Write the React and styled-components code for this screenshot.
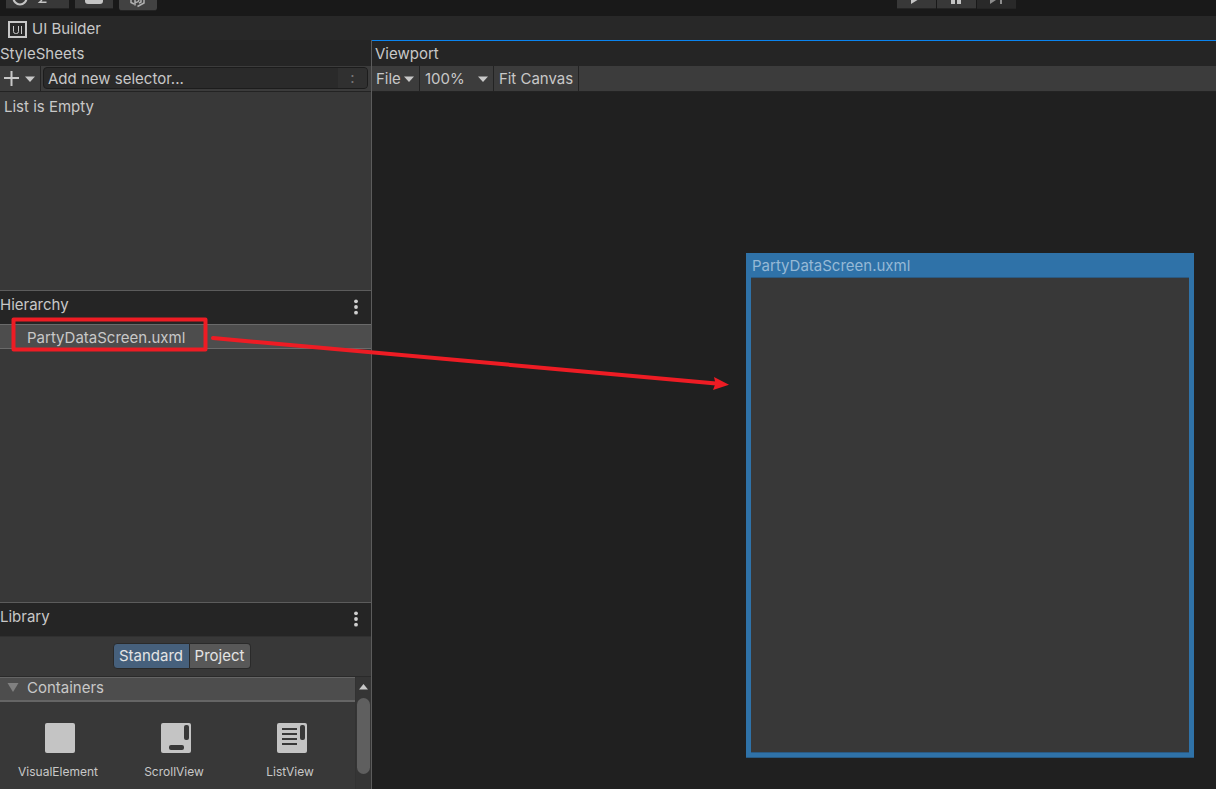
import React from "react";
import styled, { createGlobalStyle } from "styled-components";

const GlobalStyle = createGlobalStyle`
  *, *::before, *::after { box-sizing: border-box; }
  body { margin: 0; background: #202020; }
  button, input, select { font: inherit; color: inherit; margin: 0; }
`;

const Page = styled.div`
  position: relative;
  display: flex;
  flex-direction: column;
  min-height: 100vh;
  overflow: hidden;
  background: #202020;
  color: #c8c8c8;
  font: 15px/24px Inter, "Liberation Sans", sans-serif;
`;

const TopBar = styled.header`
  display: flex;
  align-items: start;
  justify-content: space-between;
  height: 16px;
  padding: 0 200px 0 6px;
  background: #191919;
`;

const ToolGroup = styled.div`
  display: flex;
  align-items: start;
  gap: ${(p) => p.$gap}px;
`;

const ToolButton = styled.button`
  display: flex;
  align-items: start;
  width: ${(p) => p.$width}px;
  height: ${(p) => (p.$tall ? 11 : 9)}px;
  padding: 0;
  border: 0;
  border-bottom: 1px solid #242424;
  border-radius: ${(p) => (p.$tall ? "0 0 3px 3px" : 0)};
  background: ${(p) => (p.$dim ? "#292929" : p.$tall ? "#424242" : "#383838")};
  svg { display: block; }
`;

const WindowTab = styled.div`
  display: flex;
  align-items: center;
  gap: 5px;
  height: 24px;
  padding: 2px 8px 0;
  background: #282828;
`;

const Workspace = styled.main`
  flex: 1;
  display: grid;
  grid-template-columns: 372px minmax(0, 1fr);
`;

const Sidebar = styled.div`
  display: flex;
  flex-direction: column;
  border-right: 1px solid #5c5c5c;
  background: #383838;
`;

const Panel = styled.section`
  flex: ${(p) => p.$share} 1 0;
  display: flex;
  flex-direction: column;
  min-height: 0;
  border-top: ${(p) => (p.$divided ? "1px solid #5c5c5c" : 0)};
`;

const PanelHeader = styled.div`
  display: flex;
  align-items: start;
  justify-content: space-between;
  height: ${(p) => (p.$tall ? 33 : 26)}px;
  padding: 2px 7px 0 0;
  background: #252525;
`;

const Title = styled.h2`
  margin: 0;
  font: inherit;
`;

const MoreButton = styled.button`
  width: 16px;
  height: 28px;
  padding: 0;
  border: 0;
  background: none;
  svg { display: block; margin: 0 auto; }
`;

const Toolbar = styled.div`
  display: flex;
  align-items: stretch;
  height: 26px;
  border-bottom: 1px solid #232323;
  background: #3c3c3c;
`;

const ToolbarButton = styled.button`
  display: flex;
  align-items: center;
  gap: ${(p) => p.$gap || 3}px;
  padding: 0 5px;
  padding-left: ${(p) => p.$inset || 5}px;
  border: 0;
  border-right: 1px solid #232323;
  background: none;
  white-space: nowrap;
`;

const SelectorField = styled.div`
  flex: 1;
  display: flex;
  align-items: stretch;
  height: 22px;
  margin: 1px 3px 0 2px;
  border: 1px solid #1c1c1c;
  border-radius: 4px;
  overflow: hidden;
  background: #2a2a2a;
`;

const SelectorInput = styled.input`
  flex: 1;
  min-width: 0;
  padding: 2px 4px 0;
  border: 0;
  outline: 0;
  background: none;
  &::placeholder { color: #c8c8c8; opacity: 1; }
`;

const PseudoButton = styled.button`
  width: 29px;
  padding: 0;
  border: 0;
  background: #303030;
  color: #777;
  line-height: 20px;
`;

const ZoomWrap = styled.label`
  display: flex;
  align-items: center;
  width: 74px;
  padding: 0 5px;
  border-right: 1px solid #232323;
`;

const ZoomSelect = styled.select`
  flex: 1;
  min-width: 0;
  padding: 0;
  border: 0;
  outline: 0;
  appearance: none;
  background: none;
`;

const EmptyNote = styled.p`
  margin: 0;
  padding: 3px 4px;
`;

const TreeRow = styled.button`
  height: 25px;
  padding: 2px 27px 0;
  border: solid #6a6a6a;
  border-width: 1px 0;
  background: #4d4d4d;
  line-height: 22px;
  text-align: left;
`;

const Segments = styled.div`
  display: flex;
  justify-content: center;
  height: 40px;
  padding: 6px 8px 7px 0;
  border-top: 1px solid #303030;
`;

const Segment = styled.button`
  height: 26px;
  min-width: ${(p) => (p.$active ? 77 : 61)}px;
  padding: 0 4px;
  border: 1px solid #2a2a2a;
  border-left-width: ${(p) => (p.$active ? 1 : 0)}px;
  border-radius: ${(p) => (p.$active ? "4px 0 0 4px" : "0 4px 4px 0")};
  background: ${(p) => (p.$active ? "#46607c" : "#585858")};
  color: #e4e4e4;
`;

const LibraryBody = styled.div`
  flex: 1;
  display: flex;
  min-height: 0;
  border-top: 1px solid #2a2a2a;
`;

const LibraryList = styled.div`
  flex: 1;
`;

const Foldout = styled.button`
  display: flex;
  align-items: start;
  gap: 8px;
  width: 100%;
  height: 25px;
  padding: 0 7px;
  border: solid #656565;
  border-width: 1px 0 2px;
  background: #4d4d4d;
  line-height: 20px;
  svg { margin-top: 5px; }
`;

const Tiles = styled.div`
  display: grid;
  grid-template-columns: repeat(3, 116px);
  padding-top: 21px;
`;

const Tile = styled.button`
  display: flex;
  flex-direction: column;
  align-items: center;
  gap: 8px;
  padding: 0;
  border: 0;
  background: none;
  font-size: 12px;
  line-height: 22px;
  svg { margin-left: 3px; }
`;

const Scrollbar = styled.div`
  display: flex;
  flex-direction: column;
  align-items: center;
  gap: 8px;
  width: 16px;
  padding-top: 7px;
  border-left: 1px solid #323232;
  background: #353535;
`;

const ScrollThumb = styled.div`
  width: 13px;
  height: 76px;
  border-radius: 7px;
  background: #5f5f5f;
`;

const Viewport = styled.section`
  display: flex;
  flex-direction: column;
  border-top: 1px solid #0a84f0;
`;

const ViewportHeader = styled(PanelHeader)`
  height: 25px;
  padding: 1px 3px 0;
`;

const Stage = styled.div`
  position: relative;
  flex: 1;
  background: #202020;
`;

const CanvasFrame = styled.div`
  position: absolute;
  top: 161px;
  right: 22px;
  display: flex;
  flex-direction: column;
  width: 448px;
  height: 505px;
  padding: 0 5px 4px;
  border-bottom: 1px solid #285a83;
  background: #2f72a8;
`;

const CanvasTitle = styled.div`
  height: 24px;
  padding-left: 1px;
  color: #96b9d6;
  line-height: 26px;
`;

const CanvasSurface = styled.div`
  flex: 1;
  border: solid #2b5a82;
  border-width: 1px 0;
  background: #383838;
`;

const Annotation = styled.svg`
  position: absolute;
  top: 0;
  left: 0;
  pointer-events: none;
`;

const Caret = () => (
  <svg width="10" height="6" viewBox="0 0 10 6" aria-hidden="true">
    <path d="M0 0.5h10L5 6z" fill="#c8c8c8" />
  </svg>
);

const Dots = () => (
  <svg width="4" height="16" viewBox="0 0 4 16" fill="#d0d0d0" aria-hidden="true">
    <circle cx="2" cy="2.3" r="1.9" />
    <circle cx="2" cy="8" r="1.9" />
    <circle cx="2" cy="13.7" r="1.9" />
  </svg>
);

const TileIcon = ({ kind }) => (
  <svg width="30" height="30" viewBox="0 0 30 30" aria-hidden="true">
    <rect width="30" height="30" rx="2" fill="#c4c4c4" />
    <g fill="#383838">
      {kind !== "VisualElement" && <rect x="23" y="2" width="5" height="15" rx="2" />}
      {kind === "ScrollView" && <rect x="8" y="22" width="15" height="5" rx="2" />}
      {kind === "ListView" &&
        [5, 10, 15, 20].map((y) => <rect key={y} x="5" y={y} width="15" height="2" />)}
    </g>
  </svg>
);

const tiles = ["VisualElement", "ScrollView", "ListView"];

export default function App() {
  return (
    <Page>
      <GlobalStyle />
      <TopBar>
        <ToolGroup $gap={6}>
          <ToolButton $width={63} aria-label="Undo history">
            <svg width="63" height="8" viewBox="0 0 63 8" fill="none" stroke="#c4c4c4">
              <path d="M7.500 -2a6.500 6.500 0 0 0 13 0" strokeWidth="2.200" />
              <path d="M36 0l-2.500 2.300h7" strokeWidth="1.400" />
            </svg>
          </ToolButton>
          <ToolButton $width={38} aria-label="Cloud">
            <svg width="38" height="8" viewBox="0 0 38 8">
              <path d="M10 0h18v1q0 3-3 3H13q-3 0-3-3z" fill="#c4c4c4" />
            </svg>
          </ToolButton>
          <ToolButton $width={38} $tall aria-label="Version control">
            <svg width="38" height="10" viewBox="0 0 38 10" fill="none" stroke="#b0b0b0" strokeWidth="1.5">
              <path d="M12 0v2.500l3 1.500M16 0v5.500M16 2q3 1 4-2M18.500 6.500l6.500-3.500V0M20 3l2-1V0" />
            </svg>
          </ToolButton>
        </ToolGroup>
        <ToolGroup $gap={1}>
          <ToolButton $width={39} aria-label="Play">
            <svg width="39" height="8" viewBox="0 0 39 8"><path d="M14 0h6.500L14 4z" fill="#c4c4c4" /></svg>
          </ToolButton>
          <ToolButton $width={39} aria-label="Pause">
            <svg width="39" height="8" viewBox="0 0 39 8"><path d="M14 0h4v4h-4zM20 0h4v4h-4z" fill="#c4c4c4" /></svg>
          </ToolButton>
          <ToolButton $width={39} $dim aria-label="Step">
            <svg width="39" height="8" viewBox="0 0 39 8"><path d="M13 0h6l-6 4zM23 0h2v4h-2z" fill="#8c8c8c" /></svg>
          </ToolButton>
        </ToolGroup>
      </TopBar>

      <WindowTab>
        <svg width="19" height="17" viewBox="0 0 19 17" fill="none" stroke="#c8c8c8" aria-hidden="true">
          <rect x="1" y="1" width="17" height="15" strokeWidth="2" />
          <path d="M5.500 5v5.500q0 2 2 2h1q2 0 2-2V5M13.500 5v8" strokeWidth="1" />
        </svg>
        <span>UI Builder</span>
      </WindowTab>

      <Workspace>
        <Sidebar>
          <Panel $share={250}>
            <PanelHeader><Title>StyleSheets</Title></PanelHeader>
            <Toolbar>
              <ToolbarButton $inset={4} $gap={5} aria-label="Add style sheet">
                <svg width="16" height="16" viewBox="0 0 16 16"><path d="M0 7h15M7.500 0v15" stroke="#c8c8c8" strokeWidth="2" /></svg>
                <Caret />
              </ToolbarButton>
              <SelectorField>
                <SelectorInput aria-label="Selector" placeholder="Add new selector..." />
                <PseudoButton aria-label="Pseudo state">:</PseudoButton>
              </SelectorField>
            </Toolbar>
            <EmptyNote>List is Empty</EmptyNote>
          </Panel>

          <Panel $share={311} $divided>
            <PanelHeader $tall>
              <Title>Hierarchy</Title>
              <MoreButton aria-label="Hierarchy options"><Dots /></MoreButton>
            </PanelHeader>
            <TreeRow>PartyDataScreen.uxml</TreeRow>
          </Panel>

          <Panel $share={186} $divided>
            <PanelHeader $tall>
              <Title>Library</Title>
              <MoreButton aria-label="Library options"><Dots /></MoreButton>
            </PanelHeader>
            <Segments>
              <Segment $active>Standard</Segment>
              <Segment>Project</Segment>
            </Segments>
            <LibraryBody>
              <LibraryList>
                <Foldout>
                  <svg width="12" height="9" viewBox="0 0 12 9"><path d="M0.500 0h11L6 9z" fill="#808080" /></svg>
                  Containers
                </Foldout>
                <Tiles>
                  {tiles.map((name) => (
                    <Tile key={name}><TileIcon kind={name} />{name}</Tile>
                  ))}
                </Tiles>
              </LibraryList>
              <Scrollbar>
                <svg width="9" height="6" viewBox="0 0 9 6"><path d="M0 5.500L4.500 0 9 5.500z" fill="#c8c8c8" /></svg>
                <ScrollThumb />
              </Scrollbar>
            </LibraryBody>
          </Panel>
        </Sidebar>

        <Viewport>
          <ViewportHeader><Title>Viewport</Title></ViewportHeader>
          <Toolbar>
            <ToolbarButton $inset={4}>File<Caret /></ToolbarButton>
            <ZoomWrap>
              <ZoomSelect aria-label="Zoom" defaultValue="100%">
                <option>50%</option>
                <option>100%</option>
                <option>200%</option>
              </ZoomSelect>
              <Caret />
            </ZoomWrap>
            <ToolbarButton>Fit Canvas</ToolbarButton>
          </Toolbar>
          <Stage>
            <CanvasFrame>
              <CanvasTitle>PartyDataScreen.uxml</CanvasTitle>
              <CanvasSurface />
            </CanvasFrame>
          </Stage>
        </Viewport>
      </Workspace>

      <Annotation width="740" height="400" viewBox="0 0 740 400" aria-hidden="true">
        <rect x="13.500" y="319.500" width="192" height="30" fill="none" stroke="#ee1c24" strokeWidth="4" strokeLinejoin="round" />
        <path d="M213 338L716 383.500" stroke="#ee1c24" strokeWidth="4" strokeLinecap="round" />
        <path d="M729 384.700L714 377 715.500 383.500 713 390z" fill="#ee1c24" />
      </Annotation>
    </Page>
  );
}
